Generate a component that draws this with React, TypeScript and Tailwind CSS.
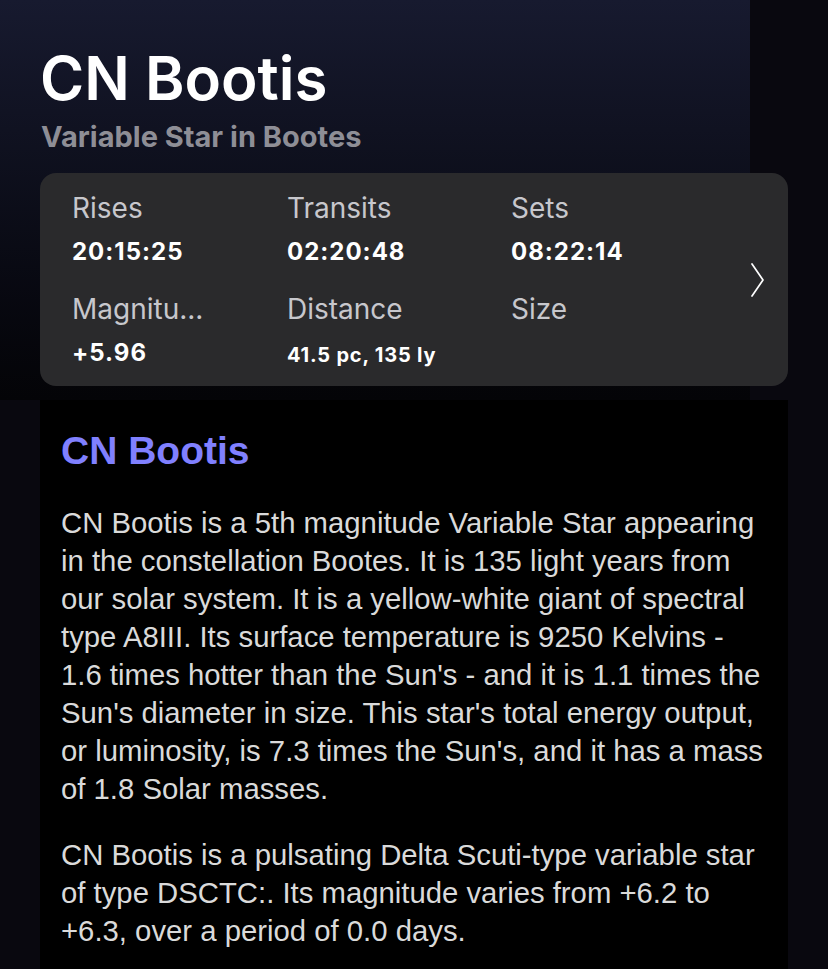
type Stat = {
  label: string;
  value: string;
  small?: boolean;
};

const stats: Stat[] = [
  { label: 'Rises', value: '20:15:25' },
  { label: 'Transits', value: '02:20:48' },
  { label: 'Sets', value: '08:22:14' },
  { label: 'Magnitu...', value: '+5.96' },
  { label: 'Distance', value: '41.5 pc, 135 ly', small: true },
  { label: 'Size', value: '' },
];

export default function App() {
  return (
    <div className="w-[828px] min-h-[969px] bg-[#09080f] overflow-hidden font-[family-name:Inter,sans-serif]">
      {/* HEADER */}
      <div className="w-[750px] h-[400px] bg-gradient-to-b from-[#171a2f] to-[#040407] pt-[42px]">
        <h1 className="pl-[40px] text-[60px] leading-[72px] font-semibold text-white">CN Bootis</h1>
        <h2 className="pl-[41px] mt-[6px] text-[29px] leading-[34px] font-bold text-[#8e8e96]">
          Variable Star in Bootes
        </h2>
        {/* STATS CARD */}
        <div className="relative ml-[40px] mt-[19px] w-[748px] h-[213px] rounded-[16px] bg-[#2a2a2c] pl-[32px] pt-[18px]">
          <div className="grid grid-cols-[215px_224px_200px] gap-y-[25px]">
            {stats.map((s) => (
              <div key={s.label} className="flex flex-col">
                <span className="text-[28px] leading-[34px] text-[#c7c7cc]">{s.label}</span>
                <span
                  className={
                    s.small
                      ? 'mt-[12px] text-[20px] leading-[34px] font-bold text-white tracking-[0.8px]'
                      : 'mt-[12px] text-[24px] leading-[30px] font-bold text-white tracking-[1px]'
                  }
                >
                  {s.value}
                </span>
              </div>
            ))}
          </div>
          <svg
            className="absolute right-[24px] top-[88px] w-[14px] h-[38px]"
            viewBox="0 0 14 38"
            fill="none"
            stroke="white"
            strokeWidth={1.7}
            strokeLinecap="round"
            strokeLinejoin="round"
          >
            <path d="M2 3 L13 19 L2 35" />
          </svg>
        </div>
      </div>
      {/* DESCRIPTION */}
      <div className="ml-[40px] w-[748px] min-h-[569px] bg-black px-[21px] pt-[28px] pb-[20px] font-[family-name:'Liberation_Sans',Arial,sans-serif]">
        <h3 className="text-[39px] leading-[46px] font-bold text-[#8080ff]">CN Bootis</h3>
        <p className="mt-[30px] text-[29.3px] leading-[38px] text-[#dadada]">
          CN Bootis is a 5th magnitude Variable Star appearing in the constellation Bootes. It is 135 light years
          from our solar system. It is a yellow-white giant of spectral type A8III. Its surface temperature is
          9250 Kelvins - 1.6 times hotter than the Sun's - and it is 1.1 times the Sun's diameter in size. This
          star's total energy output, or luminosity, is 7.3 times the Sun's, and it has a mass of 1.8 Solar
          masses.
        </p>
        <p className="mt-[28px] text-[29.3px] leading-[38px] text-[#dadada]">
          CN Bootis is a pulsating Delta Scuti-type variable star of type DSCTC:. Its magnitude varies from +6.2
          to +6.3, over a period of 0.0 days.
        </p>
      </div>
    </div>
  );
}
